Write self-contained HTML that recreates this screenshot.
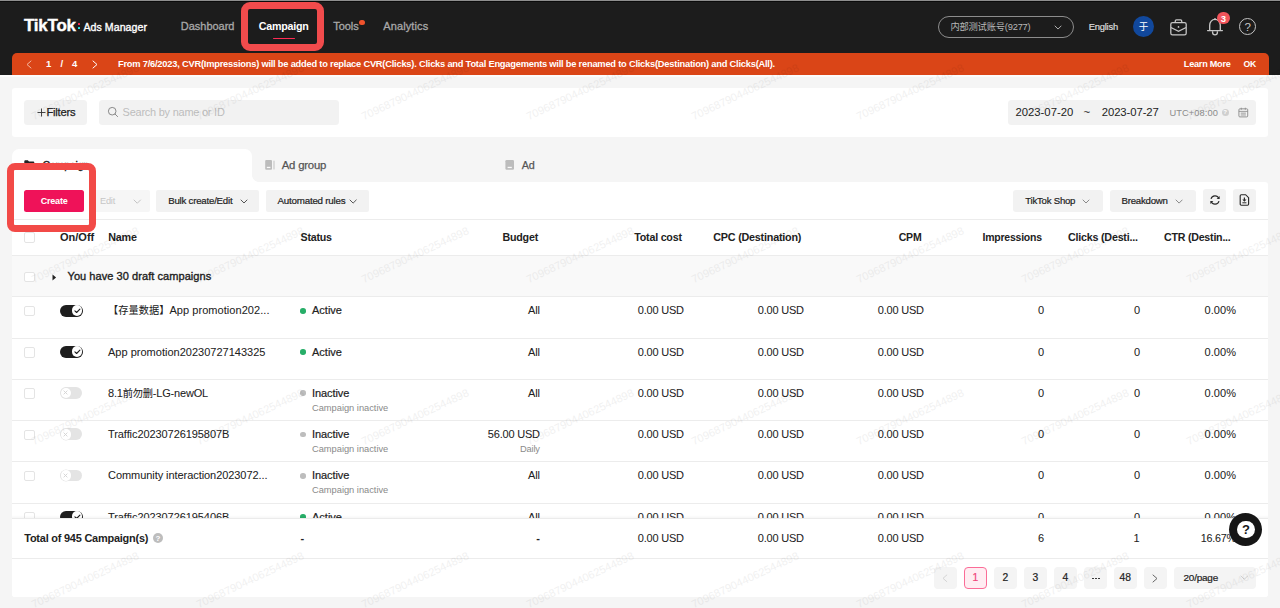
<!DOCTYPE html>
<html lang="en">
<head>
<meta charset="utf-8">
<title>TikTok Ads Manager - Campaign</title>
<style>
*{box-sizing:border-box;margin:0;padding:0}
html,body{width:1280px;height:608px;overflow:hidden;background:#f5f5f5}
body{font-family:"Liberation Sans","Noto Sans CJK SC",sans-serif;color:#222;font-size:11px}
#page{position:relative;width:1280px;height:608px;overflow:hidden;background:#f5f5f5}
#page div,#page svg{position:absolute}
.wm{font-size:11px;line-height:14px;color:#000;opacity:.055;transform:rotate(-25.2deg);transform-origin:0 100%;white-space:nowrap;letter-spacing:.05px;pointer-events:none}
</style>
</head>
<body>
<div id="page">
<div style="position:absolute;left:0px;top:0px;width:1280px;height:75px;background:#1c1c1c;border-radius:0px;"></div>
<div style="position:absolute;left:0px;top:0px;width:1280px;height:1px;background:#8e8e8e;border-radius:0px;"></div>
<div style="position:absolute;left:0px;top:1px;width:1280px;height:1px;background:#0b0b0b;border-radius:0px;"></div>
<div style="position:absolute;top:17.51px;font-size:16.97px;line-height:16px;font-weight:bold;color:#fff;white-space:nowrap;letter-spacing:-0.220px;-webkit-text-stroke:0.4px #fff;left:24px;">TikTok</div>
<div style="position:absolute;left:78px;top:22.5px;width:2.3px;height:2.3px;background:#fe2c55;border-radius:0.5px;"></div>
<div style="position:absolute;left:78px;top:26.7px;width:2.3px;height:2.3px;background:#25f4ee;border-radius:0.5px;"></div>
<div style="position:absolute;top:18.50px;font-size:10.6px;line-height:16px;font-weight:normal;color:#fff;white-space:nowrap;letter-spacing:0.044px;-webkit-text-stroke:0.35px #fff;left:83.5px;">Ads Manager</div>
<div style="position:absolute;top:18.11px;font-size:11px;line-height:16px;font-weight:normal;color:#a8a8a8;white-space:nowrap;letter-spacing:-0.009px;-webkit-text-stroke:0.3px #a8a8a8;left:180.75px;">Dashboard</div>
<div style="position:absolute;top:18.12px;font-size:10.7px;line-height:16px;font-weight:bold;color:#fff;white-space:nowrap;letter-spacing:-0.220px;left:258.75px;">Campaign</div>
<div style="position:absolute;top:18.11px;font-size:11px;line-height:16px;font-weight:normal;color:#a8a8a8;white-space:nowrap;letter-spacing:-0.037px;-webkit-text-stroke:0.3px #a8a8a8;left:333.25px;">Tools</div>
<div style="position:absolute;top:18.11px;font-size:11px;line-height:16px;font-weight:normal;color:#a8a8a8;white-space:nowrap;letter-spacing:0.108px;-webkit-text-stroke:0.3px #a8a8a8;left:383.25px;">Analytics</div>
<div style="position:absolute;left:272.5px;top:37.5px;width:22.5px;height:1.7px;background:#fe2c55;border-radius:1px;"></div>
<div style="position:absolute;left:359.2px;top:19.7px;width:5.6px;height:5.6px;background:#f0522c;border-radius:50%;"></div>
<div style="left:241.2px;top:2.4px;width:83.1px;height:48.9px;border:7.8px solid #f14b4c;border-radius:9px"></div>
<div style="left:938px;top:16px;width:136px;height:22px;border:1px solid #8c8c8c;border-radius:11px"></div>
<div style="position:absolute;top:19.21px;font-size:9.31px;line-height:16px;font-weight:normal;color:#b8b8b8;white-space:nowrap;letter-spacing:-0.220px;left:950.4px;">内部测试账号(9277)</div>
<svg style="left:1053.9px;top:24.78px;" width="8.1" height="5.05" viewBox="0 0 8.1 5.05" fill="none"><polyline points="1,1 4.05,4.05 7.10,1" stroke="#b0b0b0" stroke-width="1" stroke-linecap="round" stroke-linejoin="round"/></svg>
<div style="position:absolute;top:18.71px;font-size:9.4px;line-height:16px;font-weight:normal;color:#dcdcdc;white-space:nowrap;letter-spacing:-0.220px;-webkit-text-stroke:0.2px #dcdcdc;left:1088.7px;">English</div>
<div style="position:absolute;left:1132.9px;top:16.1px;width:21.2px;height:21.3px;background:#11489c;border-radius:50%;"></div>
<div style="position:absolute;top:19.20px;font-size:9.5px;line-height:16px;font-weight:normal;color:#fff;white-space:nowrap;left:943.5px;width:400px;text-align:center;">于</div>
<svg style="left:1168.5px;top:17.7px;" width="19" height="19" viewBox="0 0 20 20" fill="none"><rect x="1.9" y="4.9" width="16.2" height="12.9" rx="1.8" stroke="#c6c6c6" stroke-width="1.35"/><path d="M6.6 4.9V3.2c0-.7.5-1.2 1.2-1.2h4.4c.7 0 1.2.5 1.2 1.2v1.7" stroke="#c6c6c6" stroke-width="1.35"/><path d="M2 10l8 4 8-4" stroke="#c6c6c6" stroke-width="1.35"/><circle cx="10" cy="9.4" r="0.9" fill="#c9c9c9"/></svg>
<svg style="left:1204.5px;top:17.2px;" width="20" height="20" viewBox="0 0 20 20" fill="none"><path d="M4.7 13.6V8.2c0-3.2 2.3-5.8 5.3-5.8s5.3 2.6 5.3 5.8v5.4" stroke="#c6c6c6" stroke-width="1.35"/><path d="M2.6 13.6h14.8" stroke="#c6c6c6" stroke-width="1.35" stroke-linecap="round"/><path d="M7.6 14.2v1.4c0 1.3 1 2.3 2.4 2.3s2.4-1 2.4-2.3v-1.4" stroke="#c6c6c6" stroke-width="1.35"/><path d="M10 1.6v1" stroke="#c6c6c6" stroke-width="1.35" stroke-linecap="round"/></svg>
<div style="position:absolute;left:1217.2px;top:11.8px;width:12.6px;height:12.6px;background:#f2545b;border-radius:50%;"></div>
<div style="position:absolute;top:10.51px;font-size:9.5px;line-height:16px;font-weight:bold;color:#fff;white-space:nowrap;left:1023.5px;width:400px;text-align:center;">3</div>
<div style="left:1239px;top:18.3px;width:17.2px;height:17.2px;border:1.4px solid #c4c4c4;border-radius:50%"></div>
<div style="position:absolute;top:18.91px;font-size:11.5px;line-height:16px;font-weight:normal;color:#c9c9c9;white-space:nowrap;left:1047.6px;width:400px;text-align:center;">?</div>
<div style="position:absolute;left:12px;top:53px;width:1257px;height:22px;background:#da4517;border-radius:5px 5px 0 0;"></div>
<div style="position:absolute;left:0px;top:75px;width:1280px;height:1.5px;background:#fcfcfc;border-radius:0px;"></div>
<svg style="left:25.5px;top:59.5px;" width="6.0" height="9.0" viewBox="0 0 6.0 9.0" fill="none"><polyline points="5.00,1 1,4.50 5.00,8.00" stroke="#f3b7a0" stroke-width="1" stroke-linecap="round" stroke-linejoin="round"/></svg>
<div style="position:absolute;top:56.01px;font-size:9.5px;line-height:16px;font-weight:bold;color:#fff;white-space:nowrap;left:46px;">1</div>
<div style="position:absolute;top:56.01px;font-size:9.5px;line-height:16px;font-weight:bold;color:#fff;white-space:nowrap;left:60.5px;">/</div>
<div style="position:absolute;top:56.01px;font-size:9.5px;line-height:16px;font-weight:bold;color:#fff;white-space:nowrap;left:72px;">4</div>
<svg style="left:92px;top:59.5px;" width="6" height="9.0" viewBox="0 0 6 9.0" fill="none"><polyline points="1,1 5.00,4.50 1,8.00" stroke="#fff" stroke-width="1" stroke-linecap="round" stroke-linejoin="round"/></svg>
<div style="position:absolute;top:56.01px;font-size:9.3px;line-height:16px;font-weight:bold;color:#fff;white-space:nowrap;letter-spacing:-0.218px;left:118px;">From 7/6/2023, CVR(Impressions) will be added to replace CVR(Clicks). Clicks and Total Engagements will be renamed to Clicks(Destination) and Clicks(All).</div>
<div style="position:absolute;top:56.02px;font-size:9.11px;line-height:16px;font-weight:bold;color:#fff;white-space:nowrap;letter-spacing:-0.220px;left:1183.8px;">Learn More</div>
<div style="position:absolute;top:56.00px;font-size:8.69px;line-height:16px;font-weight:bold;color:#fff;white-space:nowrap;letter-spacing:-0.220px;left:1243.4px;">OK</div>
<div style="position:absolute;left:12px;top:88px;width:1256.2px;height:49px;background:#fff;border-radius:3px;"></div>
<div style="position:absolute;left:24px;top:99.5px;width:62.6px;height:25.0px;background:#f2f2f2;border-radius:3.5px;"></div>
<svg style="left:36.5px;top:107.5px;" width="9" height="9" viewBox="0 0 9 9" fill="none"><path d="M4.5 0.5v8M0.5 4.5h8" stroke="#333" stroke-width="0.9"/></svg>
<div style="position:absolute;top:104.11px;font-size:11.22px;line-height:16px;font-weight:normal;color:#222;white-space:nowrap;letter-spacing:-0.220px;-webkit-text-stroke:0.25px #222;left:46.4px;">Filters</div>
<div style="position:absolute;left:99px;top:99.5px;width:240px;height:25.0px;background:#f2f2f2;border-radius:3.5px;"></div>
<svg style="left:106.5px;top:106px;" width="12" height="12" viewBox="0 0 12 12" fill="none"><circle cx="5.2" cy="5.2" r="3.8" stroke="#8a8a8a" stroke-width="1"/><path d="M8 8l2.6 2.6" stroke="#8a8a8a" stroke-width="1" stroke-linecap="round"/></svg>
<div style="position:absolute;top:104.11px;font-size:10.95px;line-height:16px;font-weight:normal;color:#bdbdbd;white-space:nowrap;letter-spacing:-0.220px;left:122.6px;">Search by name or ID</div>
<div style="position:absolute;left:1007.5px;top:99.5px;width:248.8px;height:25.5px;background:#f2f2f2;border-radius:3.5px;"></div>
<div style="position:absolute;top:104.01px;font-size:11.3px;line-height:16px;font-weight:normal;color:#222;white-space:nowrap;letter-spacing:-0.005px;left:1015.5px;">2023-07-20</div>
<div style="position:absolute;top:104.01px;font-size:11.3px;line-height:16px;font-weight:normal;color:#222;white-space:nowrap;left:1083.5px;">~</div>
<div style="position:absolute;top:104.01px;font-size:11.3px;line-height:16px;font-weight:normal;color:#222;white-space:nowrap;letter-spacing:-0.080px;left:1101.75px;">2023-07-27</div>
<div style="position:absolute;top:104.71px;font-size:9.3px;line-height:16px;font-weight:normal;color:#8c8c8c;white-space:nowrap;letter-spacing:0.076px;left:1169.5px;">UTC+08:00</div>
<div style="position:absolute;left:1221.5px;top:108.5px;width:7.0px;height:7.0px;background:#cfcfcf;border-radius:50%;"></div>
<div style="position:absolute;top:104.30px;font-size:6px;line-height:16px;font-weight:bold;color:#fff;white-space:nowrap;left:1025px;width:400px;text-align:center;">?</div>
<svg style="left:1237.6px;top:106.8px;" width="11" height="11" viewBox="0 0 12 12" fill="none"><rect x="1" y="2" width="9.6" height="8.8" rx="1" stroke="#8a8a8a" stroke-width="1"/><path d="M1 4.8h9.6M3.6 0.8v2.2M8 0.8v2.2M3 6.7h5.6M3 8.7h5.6" stroke="#8a8a8a" stroke-width="0.9"/></svg>
<div style="position:absolute;left:12px;top:149px;width:239.6px;height:41px;background:#fff;border-radius:7px 7px 0 0;"></div>
<div style="left:251.6px;top:175px;width:7px;height:7px;background:radial-gradient(circle at 100% 0,#f5f5f5 6.6px,#fff 7.2px)"></div>
<svg style="left:24px;top:160px;" width="11" height="10" viewBox="0 0 11 10" fill="none"><path d="M0.3 1.2c0-.5.4-.9.9-.9h2.6l1.2 1.3h4.4c.5 0 .9.4.9.9v5.8c0 .5-.4.9-.9.9H1.2c-.5 0-.9-.4-.9-.9z" fill="#222"/></svg>
<div style="position:absolute;top:156.91px;font-size:10.59px;line-height:16px;font-weight:normal;color:#222;white-space:nowrap;letter-spacing:-0.220px;-webkit-text-stroke:0.3px #222;left:42.5px;">Campaign</div>
<svg style="left:265px;top:160.2px;" width="11" height="11" viewBox="0 0 11 11" fill="none"><rect x="0.2" y="0.1" width="6.8" height="9.7" rx="1" fill="#bcbcbc"/><rect x="1.8" y="6.8" width="3.6" height="1.3" fill="#fafafa"/><rect x="8.5" y="0.5" width="1" height="9" rx=".5" fill="#c2c2c2"/></svg>
<div style="position:absolute;top:156.92px;font-size:11.39px;line-height:16px;font-weight:normal;color:#555;white-space:nowrap;letter-spacing:-0.220px;-webkit-text-stroke:0.25px #555;left:281.75px;">Ad group</div>
<svg style="left:505px;top:160.2px;" width="11" height="11" viewBox="0 0 11 11" fill="none"><rect x="0.4" y="0.1" width="8.6" height="9.7" rx="1.2" fill="#bcbcbc"/><rect x="2.6" y="6.8" width="4.2" height="1.3" fill="#fafafa"/></svg>
<div style="position:absolute;top:156.91px;font-size:10.77px;line-height:16px;font-weight:normal;color:#555;white-space:nowrap;letter-spacing:-0.220px;-webkit-text-stroke:0.25px #555;left:521.75px;">Ad</div>
<div style="position:absolute;left:12px;top:182px;width:1256.2px;height:414.5px;background:#fff;border-radius:0 3px 3px 3px;"></div>
<div style="position:absolute;left:24px;top:190px;width:60px;height:22px;background:#ef1259;border-radius:2.5px;"></div>
<div style="position:absolute;top:192.60px;font-size:9.03px;line-height:16px;font-weight:bold;color:#fff;white-space:nowrap;letter-spacing:-0.220px;left:40.75px;">Create</div>
<div style="position:absolute;left:90px;top:190px;width:59.5px;height:22px;background:#f6f6f6;border-radius:2px;"></div>
<div style="position:absolute;top:193.01px;font-size:9.21px;line-height:16px;font-weight:normal;color:#c6c6c6;white-space:nowrap;letter-spacing:-0.220px;left:100px;">Edit</div>
<svg style="left:133.0px;top:198.88px;" width="8.5" height="5.25" viewBox="0 0 8.5 5.25" fill="none"><polyline points="1,1 4.25,4.25 7.50,1" stroke="#c4c4c4" stroke-width="1" stroke-linecap="round" stroke-linejoin="round"/></svg>
<div style="position:absolute;left:156.25px;top:190px;width:103.0px;height:22px;background:#f2f2f2;border-radius:2px;"></div>
<div style="position:absolute;top:193.01px;font-size:9.67px;line-height:16px;font-weight:normal;color:#222;white-space:nowrap;letter-spacing:-0.220px;-webkit-text-stroke:0.2px #222;left:168.25px;">Bulk create/Edit</div>
<svg style="left:239.5px;top:199.1px;" width="8" height="5.0" viewBox="0 0 8 5.0" fill="none"><polyline points="1,1 4.00,4.00 7.00,1" stroke="#555" stroke-width="1" stroke-linecap="round" stroke-linejoin="round"/></svg>
<div style="position:absolute;left:265.75px;top:190px;width:103.5px;height:22px;background:#f2f2f2;border-radius:2px;"></div>
<div style="position:absolute;top:193.00px;font-size:9.79px;line-height:16px;font-weight:normal;color:#222;white-space:nowrap;letter-spacing:-0.220px;-webkit-text-stroke:0.2px #222;left:277.5px;">Automated rules</div>
<svg style="left:349.0px;top:199.04px;" width="8.25" height="5.12" viewBox="0 0 8.25 5.12" fill="none"><polyline points="1,1 4.12,4.12 7.25,1" stroke="#555" stroke-width="1" stroke-linecap="round" stroke-linejoin="round"/></svg>
<div style="position:absolute;left:1013.4px;top:189.5px;width:89.6px;height:22.2px;background:#f2f2f2;border-radius:3px;"></div>
<div style="position:absolute;top:192.70px;font-size:9.59px;line-height:16px;font-weight:normal;color:#222;white-space:nowrap;letter-spacing:-0.220px;-webkit-text-stroke:0.2px #222;left:1025.3px;">TikTok Shop</div>
<svg style="left:1081.7px;top:199.2px;" width="8.0" height="5.0" viewBox="0 0 8.0 5.0" fill="none"><polyline points="1,1 4.00,4.00 7.00,1" stroke="#8a8a8a" stroke-width="1" stroke-linecap="round" stroke-linejoin="round"/></svg>
<div style="position:absolute;left:1109.7px;top:189.5px;width:86.55px;height:22.2px;background:#f2f2f2;border-radius:3px;"></div>
<div style="position:absolute;top:192.70px;font-size:9.65px;line-height:16px;font-weight:normal;color:#222;white-space:nowrap;letter-spacing:-0.220px;-webkit-text-stroke:0.2px #222;left:1121.5px;">Breakdown</div>
<svg style="left:1174.7px;top:199.15px;" width="8.2" height="5.1" viewBox="0 0 8.2 5.1" fill="none"><polyline points="1,1 4.10,4.10 7.20,1" stroke="#8a8a8a" stroke-width="1" stroke-linecap="round" stroke-linejoin="round"/></svg>
<div style="position:absolute;left:1202.7px;top:189.3px;width:23.55px;height:22.5px;background:#f2f2f2;border-radius:3px;"></div>
<svg style="left:1208.6px;top:194.2px;" width="12" height="12" viewBox="0 0 12 12" fill="none"><path d="M9.9 4.4A4.2 4.2 0 0 0 2 4.9" stroke="#2a2a2a" stroke-width="1.15"/><path d="M2.1 7.6A4.2 4.2 0 0 0 10 7.1" stroke="#2a2a2a" stroke-width="1.15"/><path d="M10.6 1.9v3.2H7.6z" fill="#2a2a2a"/><path d="M1.4 10.1V6.9h3z" fill="#2a2a2a"/></svg>
<div style="position:absolute;left:1232.7px;top:189.3px;width:23.5px;height:22.5px;background:#f2f2f2;border-radius:3px;"></div>
<svg style="left:1239.4px;top:194.2px;" width="11" height="12" viewBox="0 0 11 12" fill="none"><path d="M1.2 1.8c0-.6.5-1.1 1.1-1.1h4.3l3 3v6.4c0 .6-.5 1.1-1.1 1.1H2.3c-.6 0-1.1-.5-1.1-1.1z" stroke="#2a2a2a" stroke-width="1.15"/><path d="M4.8 3.6h1.2v1.9h1.5L5.4 7.7 3.3 5.5h1.5z" fill="#2a2a2a"/><path d="M3.4 8.8h4" stroke="#2a2a2a" stroke-width="1"/></svg>
<div style="position:absolute;left:12px;top:219px;width:1256.2px;height:1px;background:#ececec;border-radius:0px;"></div>
<div style="left:24px;top:232.3px;width:11px;height:10.6px;border:1px solid #e4e4e4;border-radius:2px;background:#fff"></div>
<div style="position:absolute;top:228.75px;font-size:11px;line-height:16px;font-weight:bold;color:#222;white-space:nowrap;letter-spacing:0.005px;left:60px;">On/Off</div>
<div style="position:absolute;top:228.76px;font-size:10.78px;line-height:16px;font-weight:bold;color:#222;white-space:nowrap;letter-spacing:-0.220px;left:108.25px;">Name</div>
<div style="position:absolute;top:228.76px;font-size:10.65px;line-height:16px;font-weight:bold;color:#222;white-space:nowrap;letter-spacing:-0.220px;left:300.5px;">Status</div>
<div style="position:absolute;top:228.75px;font-size:10.69px;line-height:16px;font-weight:bold;color:#222;white-space:nowrap;letter-spacing:-0.220px;left:502.5px;">Budget</div>
<div style="position:absolute;top:228.75px;font-size:10.69px;line-height:16px;font-weight:bold;color:#222;white-space:nowrap;letter-spacing:-0.220px;left:634.25px;">Total cost</div>
<div style="position:absolute;top:228.76px;font-size:10.79px;line-height:16px;font-weight:bold;color:#222;white-space:nowrap;letter-spacing:-0.220px;left:713.25px;">CPC (Destination)</div>
<div style="position:absolute;top:228.76px;font-size:10.53px;line-height:16px;font-weight:bold;color:#222;white-space:nowrap;letter-spacing:-0.220px;left:898.75px;">CPM</div>
<div style="position:absolute;top:229.76px;font-size:10.49px;line-height:16px;font-weight:bold;color:#222;white-space:nowrap;letter-spacing:-0.220px;left:982.5px;">Impressions</div>
<div style="position:absolute;top:228.75px;font-size:10.72px;line-height:16px;font-weight:bold;color:#222;white-space:nowrap;letter-spacing:-0.220px;left:1068px;">Clicks (Desti...</div>
<div style="position:absolute;top:228.75px;font-size:10.63px;line-height:16px;font-weight:bold;color:#222;white-space:nowrap;letter-spacing:-0.220px;left:1164px;">CTR (Destin...</div>
<div style="position:absolute;left:12px;top:255px;width:1256.2px;height:1px;background:#ececec;border-radius:0px;"></div>
<div style="position:absolute;left:12px;top:256px;width:1256.2px;height:40.5px;background:#f9f9f9;border-radius:0px;"></div>
<div style="left:24px;top:271.8px;width:11px;height:10.6px;border:1px solid #e4e4e4;border-radius:2px;background:#fff"></div>
<svg style="left:51.5px;top:273.5px;" width="5" height="7" viewBox="0 0 5 7" fill="none"><path d="M0.5 0.6l3.6 2.9-3.6 2.9z" fill="#222"/></svg>
<div style="position:absolute;top:268.00px;font-size:11px;line-height:16px;font-weight:normal;color:#222;white-space:nowrap;letter-spacing:0.061px;-webkit-text-stroke:0.35px #222;left:67.5px;">You have 30 draft campaigns</div>
<div style="position:absolute;left:12px;top:296.25px;width:1256.2px;height:1.0px;background:#ececec;border-radius:0px;"></div>
<div style="left:24px;top:305.75px;width:11px;height:10.6px;border:1px solid #e4e4e4;border-radius:2px;background:#fff"></div>
<div style="left:60px;top:304.50px;width:22.8px;height:12.2px;border-radius:6.1px;background:#1e1e1e"></div>
<div style="left:71.5px;top:305.15px;width:10.9px;height:10.9px;border-radius:50%;background:#fff"></div>
<svg style="left:73.9px;top:307.8px;" width="7" height="6" viewBox="0 0 7 6" fill="none"><path d="M0.9 2.9l1.7 1.6L5.9 1.2" stroke="#1e1e1e" stroke-width="1.1" stroke-linecap="round" stroke-linejoin="round"/></svg>
<div style="position:absolute;top:302.25px;font-size:11px;line-height:16px;font-weight:normal;color:#222;white-space:nowrap;letter-spacing:0.052px;-webkit-text-stroke:0.05px #222;left:108px;"><span style="font-size:10.2px">【存量数据】</span>App promotion202...</div>
<div style="position:absolute;left:300.1px;top:307.95px;width:5.6px;height:5.6px;background:#27ae68;border-radius:50%;"></div>
<div style="position:absolute;top:302.25px;font-size:11px;line-height:16px;font-weight:normal;color:#222;white-space:nowrap;letter-spacing:0.005px;-webkit-text-stroke:0.2px #222;left:312px;">Active</div>
<div style="position:absolute;top:302.25px;font-size:11px;line-height:16px;font-weight:normal;color:#222;white-space:nowrap;letter-spacing:-0.161px;-webkit-text-stroke:0.05px #222;right:740.16px;">All</div>
<div style="position:absolute;top:302.25px;font-size:11px;line-height:16px;font-weight:normal;color:#222;white-space:nowrap;letter-spacing:-0.213px;-webkit-text-stroke:0.05px #222;right:596.21px;">0.00 USD</div>
<div style="position:absolute;top:302.25px;font-size:11px;line-height:16px;font-weight:normal;color:#222;white-space:nowrap;letter-spacing:-0.213px;-webkit-text-stroke:0.05px #222;right:476.21px;">0.00 USD</div>
<div style="position:absolute;top:302.25px;font-size:11px;line-height:16px;font-weight:normal;color:#222;white-space:nowrap;letter-spacing:-0.213px;-webkit-text-stroke:0.05px #222;right:356.21px;">0.00 USD</div>
<div style="position:absolute;top:302.25px;font-size:11px;line-height:16px;font-weight:normal;color:#222;white-space:nowrap;-webkit-text-stroke:0.05px #222;right:236.00px;">0</div>
<div style="position:absolute;top:302.25px;font-size:11px;line-height:16px;font-weight:normal;color:#222;white-space:nowrap;-webkit-text-stroke:0.05px #222;right:140.00px;">0</div>
<div style="position:absolute;top:302.25px;font-size:11px;line-height:16px;font-weight:normal;color:#222;white-space:nowrap;letter-spacing:0.059px;-webkit-text-stroke:0.05px #222;right:43.94px;">0.00%</div>
<div style="position:absolute;left:12px;top:337.5px;width:1256.2px;height:1.0px;background:#ececec;border-radius:0px;"></div>
<div style="left:24px;top:347.0px;width:11px;height:10.6px;border:1px solid #e4e4e4;border-radius:2px;background:#fff"></div>
<div style="left:60px;top:345.75px;width:22.8px;height:12.2px;border-radius:6.1px;background:#1e1e1e"></div>
<div style="left:71.5px;top:346.40px;width:10.9px;height:10.9px;border-radius:50%;background:#fff"></div>
<svg style="left:73.9px;top:349.05px;" width="7" height="6" viewBox="0 0 7 6" fill="none"><path d="M0.9 2.9l1.7 1.6L5.9 1.2" stroke="#1e1e1e" stroke-width="1.1" stroke-linecap="round" stroke-linejoin="round"/></svg>
<div style="position:absolute;top:343.50px;font-size:11px;line-height:16px;font-weight:normal;color:#222;white-space:nowrap;letter-spacing:0.011px;-webkit-text-stroke:0.05px #222;left:108px;">App promotion20230727143325</div>
<div style="position:absolute;left:300.1px;top:349.2px;width:5.6px;height:5.6px;background:#27ae68;border-radius:50%;"></div>
<div style="position:absolute;top:343.50px;font-size:11px;line-height:16px;font-weight:normal;color:#222;white-space:nowrap;letter-spacing:0.005px;-webkit-text-stroke:0.2px #222;left:312px;">Active</div>
<div style="position:absolute;top:343.50px;font-size:11px;line-height:16px;font-weight:normal;color:#222;white-space:nowrap;letter-spacing:-0.161px;-webkit-text-stroke:0.05px #222;right:740.16px;">All</div>
<div style="position:absolute;top:343.50px;font-size:11px;line-height:16px;font-weight:normal;color:#222;white-space:nowrap;letter-spacing:-0.213px;-webkit-text-stroke:0.05px #222;right:596.21px;">0.00 USD</div>
<div style="position:absolute;top:343.50px;font-size:11px;line-height:16px;font-weight:normal;color:#222;white-space:nowrap;letter-spacing:-0.213px;-webkit-text-stroke:0.05px #222;right:476.21px;">0.00 USD</div>
<div style="position:absolute;top:343.50px;font-size:11px;line-height:16px;font-weight:normal;color:#222;white-space:nowrap;letter-spacing:-0.213px;-webkit-text-stroke:0.05px #222;right:356.21px;">0.00 USD</div>
<div style="position:absolute;top:343.50px;font-size:11px;line-height:16px;font-weight:normal;color:#222;white-space:nowrap;-webkit-text-stroke:0.05px #222;right:236.00px;">0</div>
<div style="position:absolute;top:343.50px;font-size:11px;line-height:16px;font-weight:normal;color:#222;white-space:nowrap;-webkit-text-stroke:0.05px #222;right:140.00px;">0</div>
<div style="position:absolute;top:343.50px;font-size:11px;line-height:16px;font-weight:normal;color:#222;white-space:nowrap;letter-spacing:0.059px;-webkit-text-stroke:0.05px #222;right:43.94px;">0.00%</div>
<div style="position:absolute;left:12px;top:378.75px;width:1256.2px;height:1.0px;background:#ececec;border-radius:0px;"></div>
<div style="left:24px;top:388.25px;width:11px;height:10.6px;border:1px solid #e4e4e4;border-radius:2px;background:#fff"></div>
<div style="left:60px;top:387.00px;width:22.4px;height:11.9px;border-radius:6px;background:#e4e4e4"></div>
<div style="left:60.5px;top:387.50px;width:10.9px;height:10.9px;border-radius:50%;background:#fff;box-shadow:0 0 0 0.4px #e2e2e2"></div>
<svg style="left:63.45px;top:390.45px;" width="5" height="5" viewBox="0 0 5 5" fill="none"><path d="M0.9 0.9l3.2 3.2M4.1 0.9L0.9 4.1" stroke="#d2d2d2" stroke-width="0.9" stroke-linecap="round"/></svg>
<div style="position:absolute;top:384.75px;font-size:11px;line-height:16px;font-weight:normal;color:#222;white-space:nowrap;letter-spacing:-0.181px;-webkit-text-stroke:0.05px #222;left:108px;">8.1<span style="font-size:10.2px">前勿删</span>-LG-newOL</div>
<div style="position:absolute;left:300.1px;top:390.45px;width:5.6px;height:5.6px;background:#bdbdbd;border-radius:50%;"></div>
<div style="position:absolute;top:384.75px;font-size:11px;line-height:16px;font-weight:normal;color:#222;white-space:nowrap;letter-spacing:-0.084px;-webkit-text-stroke:0.2px #222;left:312px;">Inactive</div>
<div style="position:absolute;top:399.76px;font-size:9.3px;line-height:16px;font-weight:normal;color:#8a8a8a;white-space:nowrap;letter-spacing:-0.014px;left:312px;">Campaign inactive</div>
<div style="position:absolute;top:384.75px;font-size:11px;line-height:16px;font-weight:normal;color:#222;white-space:nowrap;letter-spacing:-0.161px;-webkit-text-stroke:0.05px #222;right:740.16px;">All</div>
<div style="position:absolute;top:384.75px;font-size:11px;line-height:16px;font-weight:normal;color:#222;white-space:nowrap;letter-spacing:-0.213px;-webkit-text-stroke:0.05px #222;right:596.21px;">0.00 USD</div>
<div style="position:absolute;top:384.75px;font-size:11px;line-height:16px;font-weight:normal;color:#222;white-space:nowrap;letter-spacing:-0.213px;-webkit-text-stroke:0.05px #222;right:476.21px;">0.00 USD</div>
<div style="position:absolute;top:384.75px;font-size:11px;line-height:16px;font-weight:normal;color:#222;white-space:nowrap;letter-spacing:-0.213px;-webkit-text-stroke:0.05px #222;right:356.21px;">0.00 USD</div>
<div style="position:absolute;top:384.75px;font-size:11px;line-height:16px;font-weight:normal;color:#222;white-space:nowrap;-webkit-text-stroke:0.05px #222;right:236.00px;">0</div>
<div style="position:absolute;top:384.75px;font-size:11px;line-height:16px;font-weight:normal;color:#222;white-space:nowrap;-webkit-text-stroke:0.05px #222;right:140.00px;">0</div>
<div style="position:absolute;top:384.75px;font-size:11px;line-height:16px;font-weight:normal;color:#222;white-space:nowrap;letter-spacing:0.059px;-webkit-text-stroke:0.05px #222;right:43.94px;">0.00%</div>
<div style="position:absolute;left:12px;top:420.0px;width:1256.2px;height:1.0px;background:#ececec;border-radius:0px;"></div>
<div style="left:24px;top:429.5px;width:11px;height:10.6px;border:1px solid #e4e4e4;border-radius:2px;background:#fff"></div>
<div style="left:60px;top:428.25px;width:22.4px;height:11.9px;border-radius:6px;background:#e4e4e4"></div>
<div style="left:60.5px;top:428.75px;width:10.9px;height:10.9px;border-radius:50%;background:#fff;box-shadow:0 0 0 0.4px #e2e2e2"></div>
<svg style="left:63.45px;top:431.7px;" width="5" height="5" viewBox="0 0 5 5" fill="none"><path d="M0.9 0.9l3.2 3.2M4.1 0.9L0.9 4.1" stroke="#d2d2d2" stroke-width="0.9" stroke-linecap="round"/></svg>
<div style="position:absolute;top:426.00px;font-size:11px;line-height:16px;font-weight:normal;color:#222;white-space:nowrap;letter-spacing:-0.077px;-webkit-text-stroke:0.05px #222;left:108px;">Traffic20230726195807B</div>
<div style="position:absolute;left:300.1px;top:431.7px;width:5.6px;height:5.6px;background:#bdbdbd;border-radius:50%;"></div>
<div style="position:absolute;top:426.00px;font-size:11px;line-height:16px;font-weight:normal;color:#222;white-space:nowrap;letter-spacing:-0.084px;-webkit-text-stroke:0.2px #222;left:312px;">Inactive</div>
<div style="position:absolute;top:441.01px;font-size:9.3px;line-height:16px;font-weight:normal;color:#8a8a8a;white-space:nowrap;letter-spacing:-0.014px;left:312px;">Campaign inactive</div>
<div style="position:absolute;top:426.00px;font-size:11px;line-height:16px;font-weight:normal;color:#222;white-space:nowrap;letter-spacing:-0.201px;-webkit-text-stroke:0.05px #222;right:740.20px;">56.00 USD</div>
<div style="position:absolute;top:441.01px;font-size:9.3px;line-height:16px;font-weight:normal;color:#8a8a8a;white-space:nowrap;letter-spacing:-0.134px;right:740.13px;">Daily</div>
<div style="position:absolute;top:426.00px;font-size:11px;line-height:16px;font-weight:normal;color:#222;white-space:nowrap;letter-spacing:-0.213px;-webkit-text-stroke:0.05px #222;right:596.21px;">0.00 USD</div>
<div style="position:absolute;top:426.00px;font-size:11px;line-height:16px;font-weight:normal;color:#222;white-space:nowrap;letter-spacing:-0.213px;-webkit-text-stroke:0.05px #222;right:476.21px;">0.00 USD</div>
<div style="position:absolute;top:426.00px;font-size:11px;line-height:16px;font-weight:normal;color:#222;white-space:nowrap;letter-spacing:-0.213px;-webkit-text-stroke:0.05px #222;right:356.21px;">0.00 USD</div>
<div style="position:absolute;top:426.00px;font-size:11px;line-height:16px;font-weight:normal;color:#222;white-space:nowrap;-webkit-text-stroke:0.05px #222;right:236.00px;">0</div>
<div style="position:absolute;top:426.00px;font-size:11px;line-height:16px;font-weight:normal;color:#222;white-space:nowrap;-webkit-text-stroke:0.05px #222;right:140.00px;">0</div>
<div style="position:absolute;top:426.00px;font-size:11px;line-height:16px;font-weight:normal;color:#222;white-space:nowrap;letter-spacing:0.059px;-webkit-text-stroke:0.05px #222;right:43.94px;">0.00%</div>
<div style="position:absolute;left:12px;top:461.25px;width:1256.2px;height:1.0px;background:#ececec;border-radius:0px;"></div>
<div style="left:24px;top:470.75px;width:11px;height:10.6px;border:1px solid #e4e4e4;border-radius:2px;background:#fff"></div>
<div style="left:60px;top:469.50px;width:22.4px;height:11.9px;border-radius:6px;background:#e4e4e4"></div>
<div style="left:60.5px;top:470.00px;width:10.9px;height:10.9px;border-radius:50%;background:#fff;box-shadow:0 0 0 0.4px #e2e2e2"></div>
<svg style="left:63.45px;top:472.95px;" width="5" height="5" viewBox="0 0 5 5" fill="none"><path d="M0.9 0.9l3.2 3.2M4.1 0.9L0.9 4.1" stroke="#d2d2d2" stroke-width="0.9" stroke-linecap="round"/></svg>
<div style="position:absolute;top:467.25px;font-size:11px;line-height:16px;font-weight:normal;color:#222;white-space:nowrap;letter-spacing:-0.062px;-webkit-text-stroke:0.05px #222;left:108px;">Community interaction2023072...</div>
<div style="position:absolute;left:300.1px;top:472.95px;width:5.6px;height:5.6px;background:#bdbdbd;border-radius:50%;"></div>
<div style="position:absolute;top:467.25px;font-size:11px;line-height:16px;font-weight:normal;color:#222;white-space:nowrap;letter-spacing:-0.084px;-webkit-text-stroke:0.2px #222;left:312px;">Inactive</div>
<div style="position:absolute;top:482.26px;font-size:9.3px;line-height:16px;font-weight:normal;color:#8a8a8a;white-space:nowrap;letter-spacing:-0.014px;left:312px;">Campaign inactive</div>
<div style="position:absolute;top:467.25px;font-size:11px;line-height:16px;font-weight:normal;color:#222;white-space:nowrap;letter-spacing:-0.161px;-webkit-text-stroke:0.05px #222;right:740.16px;">All</div>
<div style="position:absolute;top:467.25px;font-size:11px;line-height:16px;font-weight:normal;color:#222;white-space:nowrap;letter-spacing:-0.213px;-webkit-text-stroke:0.05px #222;right:596.21px;">0.00 USD</div>
<div style="position:absolute;top:467.25px;font-size:11px;line-height:16px;font-weight:normal;color:#222;white-space:nowrap;letter-spacing:-0.213px;-webkit-text-stroke:0.05px #222;right:476.21px;">0.00 USD</div>
<div style="position:absolute;top:467.25px;font-size:11px;line-height:16px;font-weight:normal;color:#222;white-space:nowrap;letter-spacing:-0.213px;-webkit-text-stroke:0.05px #222;right:356.21px;">0.00 USD</div>
<div style="position:absolute;top:467.25px;font-size:11px;line-height:16px;font-weight:normal;color:#222;white-space:nowrap;-webkit-text-stroke:0.05px #222;right:236.00px;">0</div>
<div style="position:absolute;top:467.25px;font-size:11px;line-height:16px;font-weight:normal;color:#222;white-space:nowrap;-webkit-text-stroke:0.05px #222;right:140.00px;">0</div>
<div style="position:absolute;top:467.25px;font-size:11px;line-height:16px;font-weight:normal;color:#222;white-space:nowrap;letter-spacing:0.059px;-webkit-text-stroke:0.05px #222;right:43.94px;">0.00%</div>
<div style="position:absolute;left:12px;top:502.5px;width:1256.2px;height:1.0px;background:#ececec;border-radius:0px;"></div>
<div style="left:24px;top:512.0px;width:11px;height:10.6px;border:1px solid #e4e4e4;border-radius:2px;background:#fff"></div>
<div style="left:60px;top:510.75px;width:22.8px;height:12.2px;border-radius:6.1px;background:#1e1e1e"></div>
<div style="left:71.5px;top:511.40px;width:10.9px;height:10.9px;border-radius:50%;background:#fff"></div>
<svg style="left:73.9px;top:514.05px;" width="7" height="6" viewBox="0 0 7 6" fill="none"><path d="M0.9 2.9l1.7 1.6L5.9 1.2" stroke="#1e1e1e" stroke-width="1.1" stroke-linecap="round" stroke-linejoin="round"/></svg>
<div style="position:absolute;top:508.50px;font-size:11px;line-height:16px;font-weight:normal;color:#222;white-space:nowrap;letter-spacing:-0.077px;-webkit-text-stroke:0.05px #222;left:108px;">Traffic20230726195406B</div>
<div style="position:absolute;left:300.1px;top:514.2px;width:5.6px;height:5.6px;background:#27ae68;border-radius:50%;"></div>
<div style="position:absolute;top:508.50px;font-size:11px;line-height:16px;font-weight:normal;color:#222;white-space:nowrap;letter-spacing:0.005px;-webkit-text-stroke:0.2px #222;left:312px;">Active</div>
<div style="position:absolute;top:508.50px;font-size:11px;line-height:16px;font-weight:normal;color:#222;white-space:nowrap;letter-spacing:-0.161px;-webkit-text-stroke:0.05px #222;right:740.16px;">All</div>
<div style="position:absolute;top:508.50px;font-size:11px;line-height:16px;font-weight:normal;color:#222;white-space:nowrap;letter-spacing:-0.213px;-webkit-text-stroke:0.05px #222;right:596.21px;">0.00 USD</div>
<div style="position:absolute;top:508.50px;font-size:11px;line-height:16px;font-weight:normal;color:#222;white-space:nowrap;letter-spacing:-0.213px;-webkit-text-stroke:0.05px #222;right:476.21px;">0.00 USD</div>
<div style="position:absolute;top:508.50px;font-size:11px;line-height:16px;font-weight:normal;color:#222;white-space:nowrap;letter-spacing:-0.213px;-webkit-text-stroke:0.05px #222;right:356.21px;">0.00 USD</div>
<div style="position:absolute;top:508.50px;font-size:11px;line-height:16px;font-weight:normal;color:#222;white-space:nowrap;-webkit-text-stroke:0.05px #222;right:236.00px;">0</div>
<div style="position:absolute;top:508.50px;font-size:11px;line-height:16px;font-weight:normal;color:#222;white-space:nowrap;-webkit-text-stroke:0.05px #222;right:140.00px;">0</div>
<div style="position:absolute;top:508.50px;font-size:11px;line-height:16px;font-weight:normal;color:#222;white-space:nowrap;letter-spacing:0.059px;-webkit-text-stroke:0.05px #222;right:43.94px;">0.00%</div>
<div style="position:absolute;left:12px;top:515px;width:1256.2px;height:3px;background:linear-gradient(to bottom,rgba(0,0,0,0),rgba(0,0,0,0.035));border-radius:0px;"></div>
<div style="position:absolute;left:12px;top:518px;width:1256.2px;height:78.5px;background:#fff;border-radius:0 0 3px 3px;"></div>
<div style="position:absolute;left:12px;top:517.6px;width:1256.2px;height:0.8px;background:#ebebeb;border-radius:0px;"></div>
<div style="position:absolute;top:530.01px;font-size:10.94px;line-height:16px;font-weight:bold;color:#222;white-space:nowrap;letter-spacing:-0.220px;left:24.25px;">Total of 945 Campaign(s)</div>
<div style="position:absolute;left:153px;top:533.3px;width:10px;height:10.0px;background:#bdbdbd;border-radius:50%;"></div>
<div style="position:absolute;top:531.21px;font-size:8px;line-height:16px;font-weight:bold;color:#fff;white-space:nowrap;left:-42px;width:400px;text-align:center;">?</div>
<div style="position:absolute;top:530.00px;font-size:11px;line-height:16px;font-weight:bold;color:#222;white-space:nowrap;left:300.5px;">-</div>
<div style="position:absolute;top:530.00px;font-size:11px;line-height:16px;font-weight:bold;color:#222;white-space:nowrap;right:740.00px;">-</div>
<div style="position:absolute;top:530.00px;font-size:11px;line-height:16px;font-weight:normal;color:#222;white-space:nowrap;letter-spacing:-0.213px;-webkit-text-stroke:0.05px #222;right:596.21px;">0.00 USD</div>
<div style="position:absolute;top:530.00px;font-size:11px;line-height:16px;font-weight:normal;color:#222;white-space:nowrap;letter-spacing:-0.213px;-webkit-text-stroke:0.05px #222;right:476.21px;">0.00 USD</div>
<div style="position:absolute;top:530.00px;font-size:11px;line-height:16px;font-weight:normal;color:#222;white-space:nowrap;letter-spacing:-0.213px;-webkit-text-stroke:0.05px #222;right:356.21px;">0.00 USD</div>
<div style="position:absolute;top:530.00px;font-size:11px;line-height:16px;font-weight:normal;color:#222;white-space:nowrap;-webkit-text-stroke:0.05px #222;right:236.00px;">6</div>
<div style="position:absolute;top:530.00px;font-size:11px;line-height:16px;font-weight:normal;color:#222;white-space:nowrap;-webkit-text-stroke:0.05px #222;right:140.50px;">1</div>
<div style="position:absolute;top:530.01px;font-size:10.71px;line-height:16px;font-weight:normal;color:#222;white-space:nowrap;letter-spacing:-0.220px;-webkit-text-stroke:0.05px #222;right:44.22px;">16.67%</div>
<div style="position:absolute;left:12px;top:558px;width:1256.2px;height:1px;background:#ececec;border-radius:0px;"></div>
<div style="position:absolute;left:934px;top:566.8px;width:22.5px;height:22.2px;background:#f4f4f4;border-radius:4px;"></div>
<svg style="left:942.2px;top:573.88px;" width="5.8" height="8.65" viewBox="0 0 5.8 8.65" fill="none"><polyline points="4.80,1 1,4.32 4.80,7.65" stroke="#d4d4d4" stroke-width="1" stroke-linecap="round" stroke-linejoin="round"/></svg>
<div style="left:964.2px;top:566.8px;width:22.5px;height:22.2px;background:#ffedf2;border:1px solid #fb6c97;border-radius:4px"></div>
<div style="position:absolute;top:570.12px;font-size:10.3px;line-height:16px;font-weight:normal;color:#f0457a;white-space:nowrap;-webkit-text-stroke:0.2px #f0457a;left:775.45px;width:400px;text-align:center;">1</div>
<div style="position:absolute;left:994px;top:566.8px;width:22.5px;height:22.2px;background:#f4f4f4;border-radius:4px;"></div>
<div style="position:absolute;top:570.12px;font-size:10.3px;line-height:16px;font-weight:normal;color:#222;white-space:nowrap;-webkit-text-stroke:0.2px #222;left:805.25px;width:400px;text-align:center;">2</div>
<div style="position:absolute;left:1024px;top:566.8px;width:22.5px;height:22.2px;background:#f4f4f4;border-radius:4px;"></div>
<div style="position:absolute;top:570.12px;font-size:10.3px;line-height:16px;font-weight:normal;color:#222;white-space:nowrap;-webkit-text-stroke:0.2px #222;left:835.25px;width:400px;text-align:center;">3</div>
<div style="position:absolute;left:1054px;top:566.8px;width:22.5px;height:22.2px;background:#f4f4f4;border-radius:4px;"></div>
<div style="position:absolute;top:570.12px;font-size:10.3px;line-height:16px;font-weight:normal;color:#222;white-space:nowrap;-webkit-text-stroke:0.2px #222;left:865.25px;width:400px;text-align:center;">4</div>
<div style="position:absolute;left:1084px;top:566.8px;width:22.5px;height:22.2px;background:#f4f4f4;border-radius:4px;"></div>
<div style="position:absolute;left:1092.3px;top:577.6px;width:1.8px;height:1.8px;background:#222;border-radius:50%;"></div>
<div style="position:absolute;left:1095.3px;top:577.6px;width:1.8px;height:1.8px;background:#222;border-radius:50%;"></div>
<div style="position:absolute;left:1098.3px;top:577.6px;width:1.8px;height:1.8px;background:#222;border-radius:50%;"></div>
<div style="position:absolute;left:1114px;top:566.8px;width:22.5px;height:22.2px;background:#f4f4f4;border-radius:4px;"></div>
<div style="position:absolute;top:570.12px;font-size:10.3px;line-height:16px;font-weight:normal;color:#222;white-space:nowrap;-webkit-text-stroke:0.2px #222;left:925.25px;width:400px;text-align:center;">48</div>
<div style="position:absolute;left:1144px;top:566.8px;width:22.5px;height:22.2px;background:#f4f4f4;border-radius:4px;"></div>
<svg style="left:1152.2px;top:573.7px;" width="6.0" height="9.0" viewBox="0 0 6.0 9.0" fill="none"><polyline points="1,1 5.00,4.50 1,8.00" stroke="#666" stroke-width="1" stroke-linecap="round" stroke-linejoin="round"/></svg>
<div style="position:absolute;left:1174px;top:566.8px;width:82.3px;height:22.2px;background:#f4f4f4;border-radius:4px;"></div>
<div style="position:absolute;top:570.10px;font-size:9.97px;line-height:16px;font-weight:normal;color:#222;white-space:nowrap;letter-spacing:-0.220px;-webkit-text-stroke:0.2px #222;left:1183.5px;">20/page</div>
<svg style="left:1239.5px;top:575.35px;" width="8.6" height="5.3" viewBox="0 0 8.6 5.3" fill="none"><polyline points="1,1 4.30,4.30 7.60,1" stroke="#cfcfcf" stroke-width="1" stroke-linecap="round" stroke-linejoin="round"/></svg>
<div style="left:6.7px;top:163px;width:89.5px;height:69.1px;border:7.5px solid #f24a47;border-radius:8px"></div>
<div style="position:absolute;left:1229.3px;top:513px;width:33.0px;height:33px;background:#161616;border-radius:50%;"></div>
<div style="position:absolute;left:1237.3px;top:521px;width:17.3px;height:17.3px;background:#fff;border-radius:50%;"></div>
<div style="position:absolute;top:522.40px;font-size:13px;line-height:16px;font-weight:bold;color:#161616;white-space:nowrap;left:1045.9px;width:400px;text-align:center;">?</div>
<div class="wm" style="left:-130.5px;top:109.0px">7096879044062544898</div>
<div class="wm" style="left:34.5px;top:109.0px">7096879044062544898</div>
<div class="wm" style="left:199.5px;top:109.0px">7096879044062544898</div>
<div class="wm" style="left:364.5px;top:109.0px">7096879044062544898</div>
<div class="wm" style="left:529.5px;top:109.0px">7096879044062544898</div>
<div class="wm" style="left:694.5px;top:109.0px">7096879044062544898</div>
<div class="wm" style="left:859.5px;top:109.0px">7096879044062544898</div>
<div class="wm" style="left:1024.5px;top:109.0px">7096879044062544898</div>
<div class="wm" style="left:1189.5px;top:109.0px">7096879044062544898</div>
<div class="wm" style="left:-130.5px;top:271.5px">7096879044062544898</div>
<div class="wm" style="left:34.5px;top:271.5px">7096879044062544898</div>
<div class="wm" style="left:199.5px;top:271.5px">7096879044062544898</div>
<div class="wm" style="left:364.5px;top:271.5px">7096879044062544898</div>
<div class="wm" style="left:529.5px;top:271.5px">7096879044062544898</div>
<div class="wm" style="left:694.5px;top:271.5px">7096879044062544898</div>
<div class="wm" style="left:859.5px;top:271.5px">7096879044062544898</div>
<div class="wm" style="left:1024.5px;top:271.5px">7096879044062544898</div>
<div class="wm" style="left:1189.5px;top:271.5px">7096879044062544898</div>
<div class="wm" style="left:-130.5px;top:434.0px">7096879044062544898</div>
<div class="wm" style="left:34.5px;top:434.0px">7096879044062544898</div>
<div class="wm" style="left:199.5px;top:434.0px">7096879044062544898</div>
<div class="wm" style="left:364.5px;top:434.0px">7096879044062544898</div>
<div class="wm" style="left:529.5px;top:434.0px">7096879044062544898</div>
<div class="wm" style="left:694.5px;top:434.0px">7096879044062544898</div>
<div class="wm" style="left:859.5px;top:434.0px">7096879044062544898</div>
<div class="wm" style="left:1024.5px;top:434.0px">7096879044062544898</div>
<div class="wm" style="left:1189.5px;top:434.0px">7096879044062544898</div>
<div class="wm" style="left:-130.5px;top:596.5px">7096879044062544898</div>
<div class="wm" style="left:34.5px;top:596.5px">7096879044062544898</div>
<div class="wm" style="left:199.5px;top:596.5px">7096879044062544898</div>
<div class="wm" style="left:364.5px;top:596.5px">7096879044062544898</div>
<div class="wm" style="left:529.5px;top:596.5px">7096879044062544898</div>
<div class="wm" style="left:694.5px;top:596.5px">7096879044062544898</div>
<div class="wm" style="left:859.5px;top:596.5px">7096879044062544898</div>
<div class="wm" style="left:1024.5px;top:596.5px">7096879044062544898</div>
<div class="wm" style="left:1189.5px;top:596.5px">7096879044062544898</div>
<div class="wm" style="left:-130.5px;top:759.0px">7096879044062544898</div>
<div class="wm" style="left:34.5px;top:759.0px">7096879044062544898</div>
<div class="wm" style="left:199.5px;top:759.0px">7096879044062544898</div>
<div class="wm" style="left:364.5px;top:759.0px">7096879044062544898</div>
<div class="wm" style="left:529.5px;top:759.0px">7096879044062544898</div>
<div class="wm" style="left:694.5px;top:759.0px">7096879044062544898</div>
<div class="wm" style="left:859.5px;top:759.0px">7096879044062544898</div>
<div class="wm" style="left:1024.5px;top:759.0px">7096879044062544898</div>
<div class="wm" style="left:1189.5px;top:759.0px">7096879044062544898</div>
</div>
</body>
</html>
